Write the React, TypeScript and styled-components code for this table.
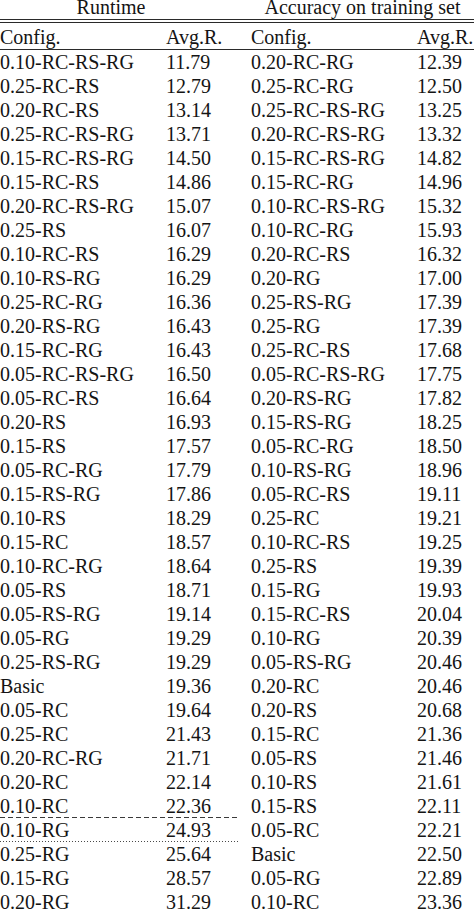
import React from "react";
import styled, { createGlobalStyle } from "styled-components";

const GlobalStyle = createGlobalStyle`
  html, body {
    margin: 0;
    padding: 0;
    background: #ffffff;
    overflow: hidden;
  }
  body {
    font-family: "Liberation Serif", "Times New Roman", serif;
    color: #141414;
  }
`;

type Sep = "none" | "dashed" | "dotted";

const left: [string, string][] = [
  ["0.10-RC-RS-RG", "11.79"],
  ["0.25-RC-RS", "12.79"],
  ["0.20-RC-RS", "13.14"],
  ["0.25-RC-RS-RG", "13.71"],
  ["0.15-RC-RS-RG", "14.50"],
  ["0.15-RC-RS", "14.86"],
  ["0.20-RC-RS-RG", "15.07"],
  ["0.25-RS", "16.07"],
  ["0.10-RC-RS", "16.29"],
  ["0.10-RS-RG", "16.29"],
  ["0.25-RC-RG", "16.36"],
  ["0.20-RS-RG", "16.43"],
  ["0.15-RC-RG", "16.43"],
  ["0.05-RC-RS-RG", "16.50"],
  ["0.05-RC-RS", "16.64"],
  ["0.20-RS", "16.93"],
  ["0.15-RS", "17.57"],
  ["0.05-RC-RG", "17.79"],
  ["0.15-RS-RG", "17.86"],
  ["0.10-RS", "18.29"],
  ["0.15-RC", "18.57"],
  ["0.10-RC-RG", "18.64"],
  ["0.05-RS", "18.71"],
  ["0.05-RS-RG", "19.14"],
  ["0.05-RG", "19.29"],
  ["0.25-RS-RG", "19.29"],
  ["Basic", "19.36"],
  ["0.05-RC", "19.64"],
  ["0.25-RC", "21.43"],
  ["0.20-RC-RG", "21.71"],
  ["0.20-RC", "22.14"],
  ["0.10-RC", "22.36"],
  ["0.10-RG", "24.93"],
  ["0.25-RG", "25.64"],
  ["0.15-RG", "28.57"],
  ["0.20-RG", "31.29"],
];

const right: [string, string][] = [
  ["0.20-RC-RG", "12.39"],
  ["0.25-RC-RG", "12.50"],
  ["0.25-RC-RS-RG", "13.25"],
  ["0.20-RC-RS-RG", "13.32"],
  ["0.15-RC-RS-RG", "14.82"],
  ["0.15-RC-RG", "14.96"],
  ["0.10-RC-RS-RG", "15.32"],
  ["0.10-RC-RG", "15.93"],
  ["0.20-RC-RS", "16.32"],
  ["0.20-RG", "17.00"],
  ["0.25-RS-RG", "17.39"],
  ["0.25-RG", "17.39"],
  ["0.25-RC-RS", "17.68"],
  ["0.05-RC-RS-RG", "17.75"],
  ["0.20-RS-RG", "17.82"],
  ["0.15-RS-RG", "18.25"],
  ["0.05-RC-RG", "18.50"],
  ["0.10-RS-RG", "18.96"],
  ["0.05-RC-RS", "19.11"],
  ["0.25-RC", "19.21"],
  ["0.10-RC-RS", "19.25"],
  ["0.25-RS", "19.39"],
  ["0.15-RG", "19.93"],
  ["0.15-RC-RS", "20.04"],
  ["0.10-RG", "20.39"],
  ["0.05-RS-RG", "20.46"],
  ["0.20-RC", "20.46"],
  ["0.20-RS", "20.68"],
  ["0.15-RC", "21.36"],
  ["0.05-RS", "21.46"],
  ["0.10-RS", "21.61"],
  ["0.15-RS", "22.11"],
  ["0.05-RC", "22.21"],
  ["Basic", "22.50"],
  ["0.05-RG", "22.89"],
  ["0.10-RC", "23.36"],
];

const Table = styled.div`
  width: 474px;
  font-size: 20px;
  font-variant-ligatures: none;
`;

const TitleRow = styled.div`
  display: grid;
  grid-template-columns: 222px 1fr;
  column-gap: 29px;
  height: 24px;
  line-height: 24px;
  margin-top: -5px;
`;

const Title = styled.div`
  text-align: center;
  white-space: nowrap;
`;

const DoubleRule = styled.div`
  height: 2px;
  border-top: 1px solid #2a2a2a;
  border-bottom: 1px solid #2a2a2a;
`;

const HeaderRow = styled.div`
  display: flex;
  padding-top: 2px;
  border-bottom: 1px solid #2a2a2a;
`;

const Row = styled.div`
  display: flex;
  height: 24px;
`;

const LeftPair = styled.div<{ $sep: Sep }>`
  display: grid;
  grid-template-columns: 166px 1fr;
  width: 240px;
  height: 24px;
  line-height: 24px;
  background-repeat: no-repeat;
  background-position: left bottom;
  background-size: 100% 1px;
  background-image: ${(p) =>
    p.$sep === "dashed"
      ? "repeating-linear-gradient(to right, #3a3a3a 0 5px, transparent 5px 8px)"
      : p.$sep === "dotted"
      ? "repeating-linear-gradient(to right, #4a4a4a 0 1px, transparent 1px 3px)"
      : "none"};
`;

const RightPair = styled.div`
  display: grid;
  grid-template-columns: 166px 1fr;
  flex: 1;
  padding-left: 11px;
  height: 24px;
  line-height: 24px;
`;

const Cell = styled.div`
  white-space: nowrap;
`;

export default function App() {
  return (
    <>
      <GlobalStyle />
      <Table>
        <TitleRow>
          <Title>Runtime</Title>
          <Title>Accuracy on training set</Title>
        </TitleRow>
        <DoubleRule />
        <HeaderRow>
          <LeftPair $sep="none">
            <Cell>Config.</Cell>
            <Cell>Avg.R.</Cell>
          </LeftPair>
          <RightPair>
            <Cell>Config.</Cell>
            <Cell>Avg.R.</Cell>
          </RightPair>
        </HeaderRow>
        {left.map((l, i) => {
          const r = right[i];
          const sep: Sep = i === 31 ? "dashed" : i === 32 ? "dotted" : "none";
          return (
            <Row key={i}>
              <LeftPair $sep={sep}>
                <Cell>{l[0]}</Cell>
                <Cell>{l[1]}</Cell>
              </LeftPair>
              <RightPair>
                <Cell>{r[0]}</Cell>
                <Cell>{r[1]}</Cell>
              </RightPair>
            </Row>
          );
        })}
      </Table>
    </>
  );
}
